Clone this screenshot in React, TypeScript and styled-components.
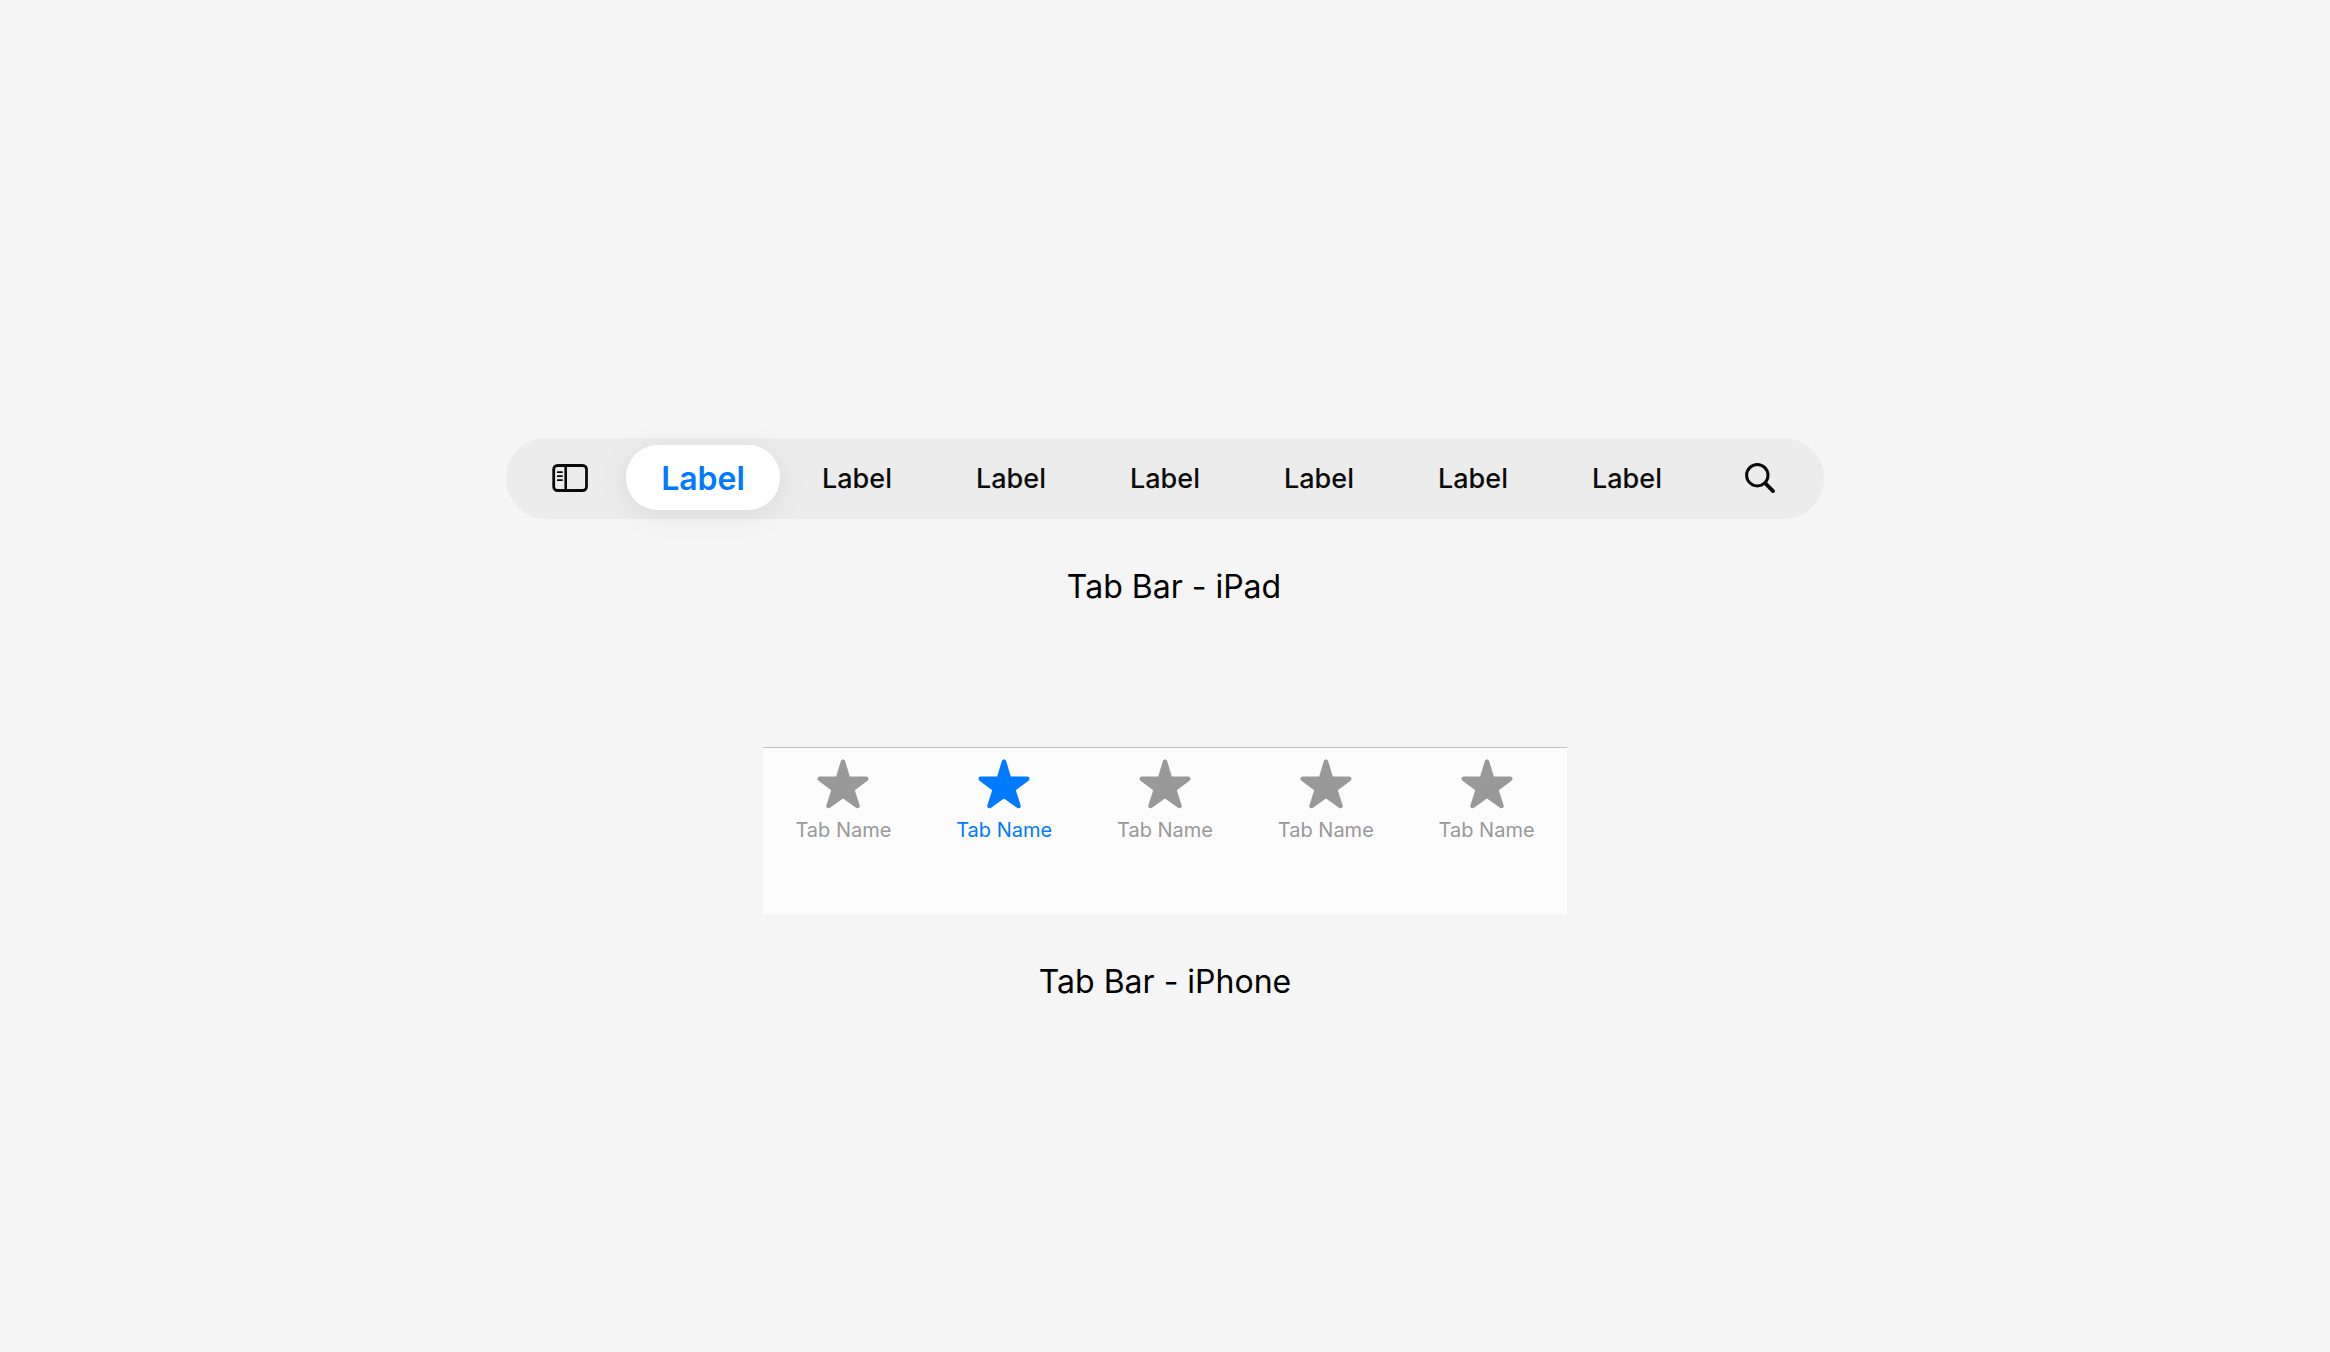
import React, { useState } from "react";
import styled, { createGlobalStyle } from "styled-components";

const GlobalStyle = createGlobalStyle`
  *, *::before, *::after { box-sizing: border-box; }
  body {
    margin: 0;
    background: #f5f5f5;
    color: #000;
    font-family: Inter, "Liberation Sans", sans-serif;
    -webkit-font-smoothing: antialiased;
  }
  button {
    margin: 0;
    padding: 0;
    border: 0;
    background: none;
    color: inherit;
    font: inherit;
    cursor: pointer;
  }
`;

const Page = styled.main`
  display: flex;
  flex-direction: column;
  align-items: center;
  justify-content: center;
  gap: 140px;
  min-height: 100vh;
  padding: 88px 24px 0;
`;

const Example = styled.figure<{ $width: number }>`
  display: flex;
  flex-direction: column;
  gap: 48px;
  width: 100%;
  max-width: ${(p) => p.$width}px;
  margin: 0;
`;

const Caption = styled.figcaption<{ $indent?: boolean }>`
  padding-left: ${(p) => (p.$indent ? 18 : 0)}px;
  font-size: 32px;
  font-weight: 400;
  line-height: 40px;
  text-align: center;
`;

const PadBar = styled.nav`
  display: flex;
  padding: 7px 8px 9px;
  border-radius: 40px;
  background: #ececec;
`;

const IconButton = styled.button`
  display: flex;
  flex: 0 1 112px;
  align-items: center;
  justify-content: center;
`;

const PadTab = styled.button<{ $active: boolean }>`
  flex: 1;
  height: 65px;
  padding-top: 2px;
  border-radius: 32px;
  background: ${(p) => (p.$active ? "#fff" : "transparent")};
  box-shadow: ${(p) => (p.$active ? "0 4px 30px rgba(0, 0, 0, 0.08)" : "none")};
  color: ${(p) => (p.$active ? "#007aff" : "#0c0c0c")};
  font-size: ${(p) => (p.$active ? 32 : 27)}px;
  font-weight: ${(p) => (p.$active ? 600 : 500)};
  line-height: 40px;
`;

const PhoneBar = styled.nav`
  display: flex;
  align-items: flex-start;
  padding: 11px 0 72px;
  border-top: 1px solid #c2c2c2;
  background: #fcfcfc;
`;

const PhoneTab = styled.button<{ $active: boolean }>`
  display: flex;
  flex: 1;
  flex-direction: column;
  align-items: center;
  gap: 9px;
  color: ${(p) => (p.$active ? "#007aff" : "#999")};
  font-size: 20px;
  font-weight: 400;
  line-height: 24px;
`;

const SidebarIcon = () => (
  <svg width="36" height="28" viewBox="0 0 36 28" fill="none" stroke="#0a0a0a" aria-hidden="true">
    <rect x="1.7" y="1.5" width="32.8" height="25" rx="3.8" strokeWidth="2.8" />
    <path d="M13.7 1.5v25" strokeWidth="2.6" />
    <path d="M5.8 8.2h4.2M5.8 12.2h4.2M5.8 16.2h4.2" strokeWidth="1.8" strokeLinecap="round" />
  </svg>
);

const SearchIcon = () => (
  <svg width="30" height="30" viewBox="0 0 30 30" fill="none" stroke="#0a0a0a" strokeLinecap="round" aria-hidden="true">
    <circle cx="12.3" cy="12.2" r="10.7" strokeWidth="3" />
    <path d="M20.2 20.2l7.8 7.9" strokeWidth="3.9" />
  </svg>
);

const StarIcon = () => (
  <svg width="52" height="50" viewBox="0 0 52 50" fill="currentColor" aria-hidden="true">
    <path d="M23.7 2.4C24.4 0 27.6 0 28.3 2.4L32.8 17.5H49.1C51.6 17.5 52.4 20.4 50.5 21.8L37.8 31.2L42.6 46.2C43.3 48.7 41 50.2 39 48.8L26 39.4L13 48.8C11 50.2 8.7 48.7 9.4 46.2L14.2 31.2L1.5 21.8C-.4 20.4.4 17.5 2.9 17.5H19.2Z" />
  </svg>
);

const padTabs = ["Label", "Label", "Label", "Label", "Label", "Label", "Label"];
const phoneTabs = ["Tab Name", "Tab Name", "Tab Name", "Tab Name", "Tab Name"];

export default function App() {
  const [padTab, setPadTab] = useState(0);
  const [phoneTab, setPhoneTab] = useState(1);

  return (
    <>
      <GlobalStyle />
      <Page>
        <Example $width={1318}>
          <PadBar>
            <IconButton type="button" aria-label="Toggle sidebar">
              <SidebarIcon />
            </IconButton>
            {padTabs.map((name, i) => (
              <PadTab key={i} type="button" $active={i === padTab} onClick={() => setPadTab(i)}>
                {name}
              </PadTab>
            ))}
            <IconButton type="button" aria-label="Search">
              <SearchIcon />
            </IconButton>
          </PadBar>
          <Caption $indent>Tab Bar - iPad</Caption>
        </Example>
        <Example $width={804}>
          <PhoneBar>
            {phoneTabs.map((name, i) => (
              <PhoneTab key={i} type="button" $active={i === phoneTab} onClick={() => setPhoneTab(i)}>
                <StarIcon />
                {name}
              </PhoneTab>
            ))}
          </PhoneBar>
          <Caption>Tab Bar - iPhone</Caption>
        </Example>
      </Page>
    </>
  );
}
